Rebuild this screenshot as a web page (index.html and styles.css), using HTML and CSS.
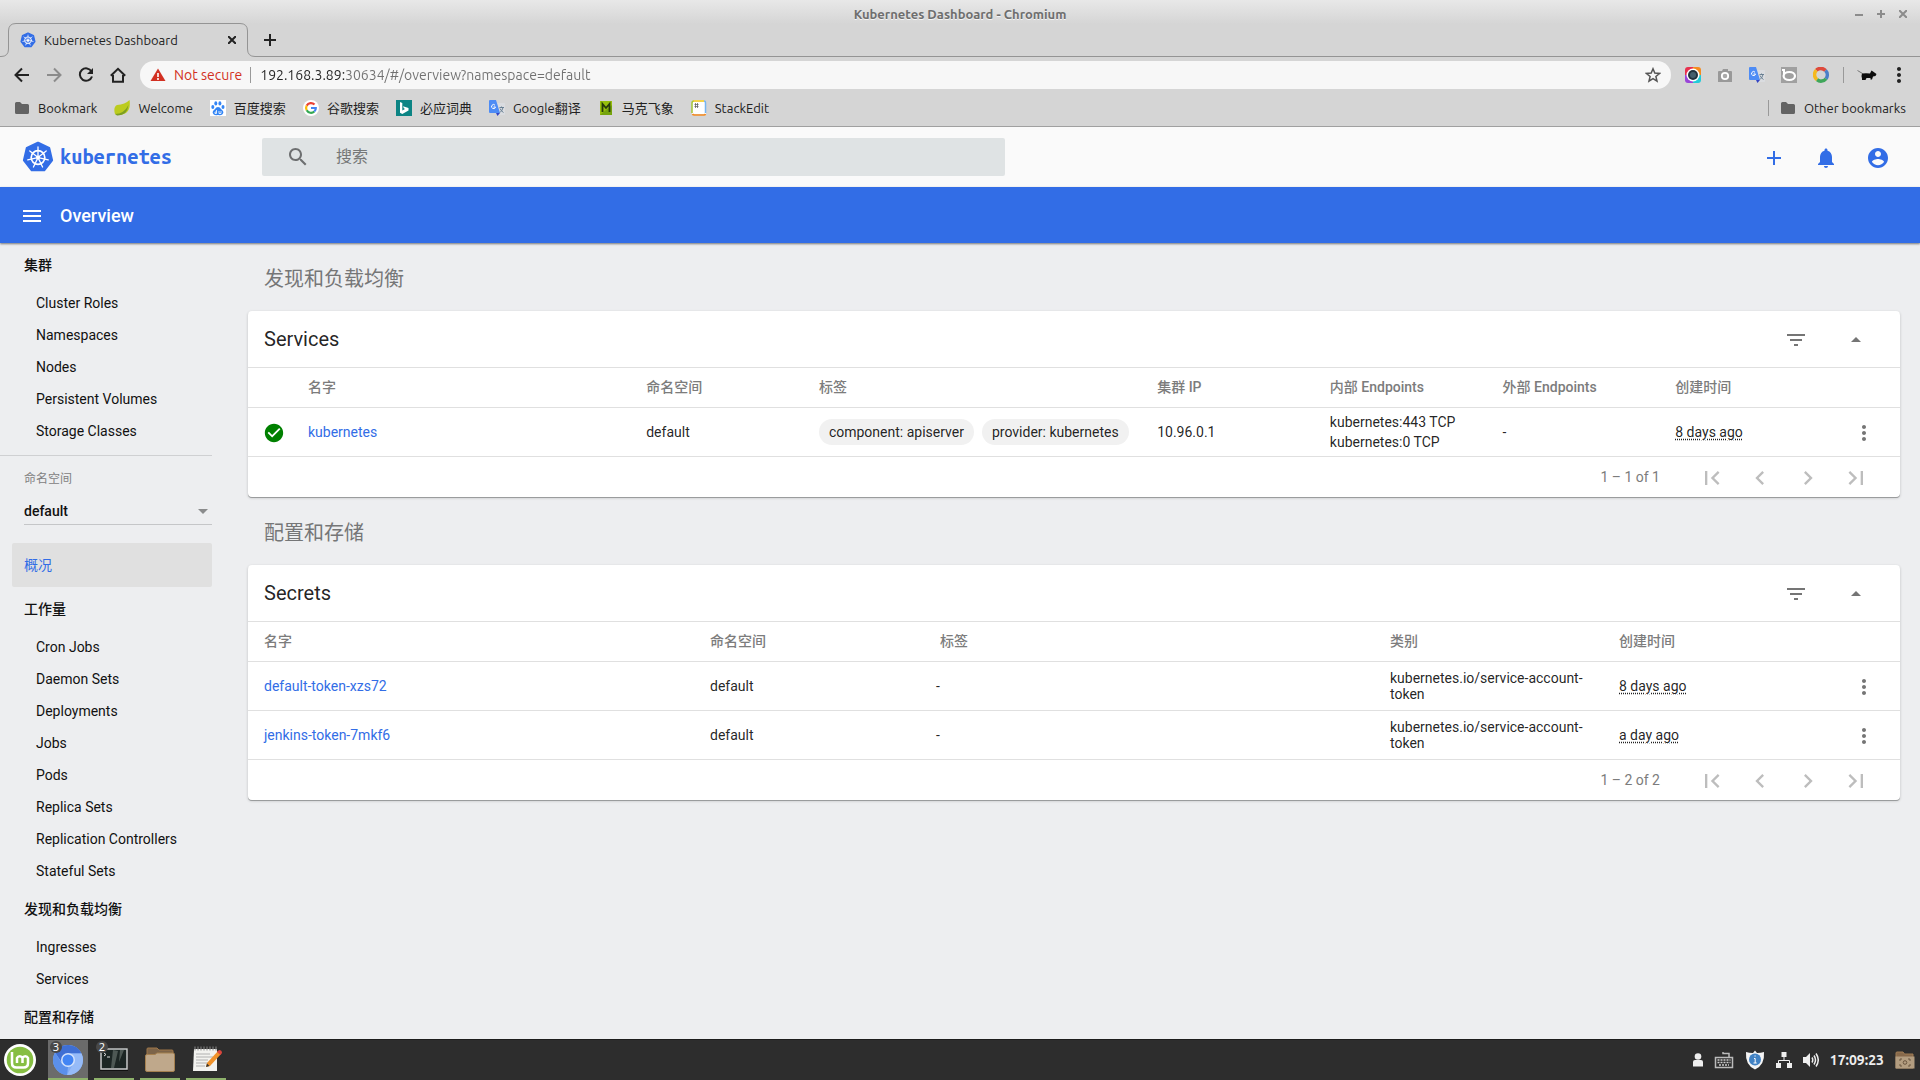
FILE: index.html
```html
<!DOCTYPE html>
<html lang="zh-CN">
<head>
<meta charset="utf-8">
<title>Kubernetes Dashboard</title>
<link rel="stylesheet" href="styles.css">
</head>
<body>
<svg class="sprite" aria-hidden="true">
  <symbol id="k8s" viewBox="0 0 32 32">
    <path d="M16 2 27 7.200 29.800 19.200 22.200 29H9.800L2.200 19.200 5 7.200Z" fill="#326de6" stroke="#326de6" stroke-width="2.600" stroke-linejoin="round"/>
    <g stroke="#fff" fill="none" stroke-linecap="round">
      <circle cx="16" cy="16.500" r="6.800" stroke-width="1.700"/>
      <g stroke-width="1.300">
        <path d="M16 15V6"/>
        <path d="M16 15V6" transform="rotate(51.430 16 16.500)"/>
        <path d="M16 15V6" transform="rotate(102.860 16 16.500)"/>
        <path d="M16 15V6" transform="rotate(154.290 16 16.500)"/>
        <path d="M16 15V6" transform="rotate(205.710 16 16.500)"/>
        <path d="M16 15V6" transform="rotate(257.140 16 16.500)"/>
        <path d="M16 15V6" transform="rotate(308.570 16 16.500)"/>
      </g>
    </g>
    <circle cx="16" cy="16.500" r="2" fill="#fff"/>
  </symbol>
  <symbol id="folder" viewBox="0 0 16 16"><path d="M1 3.500A1.500 1.500 0 0 1 2.500 2H6l2 2h5.500A1.500 1.500 0 0 1 15 5.500v7a1.500 1.500 0 0 1-1.500 1.500h-11A1.500 1.500 0 0 1 1 12.500Z" fill="#636363"/></symbol>
  <symbol id="translate" viewBox="0 0 16 16">
    <path d="M6 3h9a1 1 0 0 1 1 1v10a1 1 0 0 1-1 1H10Z" fill="#dadce0"/>
    <path d="M1 0h6l4 13H1a1 1 0 0 1-1-1V1a1 1 0 0 1 1-1Z" fill="#4e8cf5"/>
    <path d="M7 13h4l-2.500 3Z" fill="#3344c4"/>
    <path d="M6 5.200A2 2 0 1 0 6.500 7H4.500" fill="none" stroke="#fff" stroke-width="1"/>
    <path d="M10.500 7.500H15M12.500 6.500v1M14 7.500q-.5 3-3 5M11 8.500q1 2.500 3.500 4" fill="none" stroke="#60788c" stroke-width=".9"/>
  </symbol>
  <symbol id="more" viewBox="0 0 24 24"><path d="M12 8c1.100 0 2-.9 2-2s-.9-2-2-2-2 .9-2 2 .9 2 2 2zm0 2c-1.100 0-2 .9-2 2s.9 2 2 2 2-.9 2-2-.9-2-2-2zm0 6c-1.100 0-2 .9-2 2s.9 2 2 2 2-.9 2-2-.9-2-2-2z"/></symbol>
  <symbol id="filter" viewBox="0 0 24 24"><path d="M10 18h4v-2h-4v2zM3 6v2h18V6H3zm3 7h12v-2H6v2z"/></symbol>
  <symbol id="up" viewBox="0 0 24 24"><path d="m7 14 5-5 5 5z"/></symbol>
  <symbol id="first" viewBox="0 0 24 24"><path d="M18.410 16.590 13.820 12l4.590-4.590L17 6l-6 6 6 6zM6 6h2v12H6z"/></symbol>
  <symbol id="prev" viewBox="0 0 24 24"><path d="M15.410 7.410 14 6l-6 6 6 6 1.410-1.410L10.830 12z"/></symbol>
  <symbol id="next" viewBox="0 0 24 24"><path d="M10 6 8.590 7.410 13.170 12l-4.580 4.590L10 18l6-6z"/></symbol>
  <symbol id="last" viewBox="0 0 24 24"><path d="M5.590 7.410 10.180 12l-4.590 4.590L7 18l6-6-6-6zM16 6h2v12h-2z"/></symbol>
</svg>

<header class="browser">
  <div class="titlebar">
    <span class="window-title">Kubernetes Dashboard - Chromium</span>
    <div class="window-buttons">
      <button aria-label="Minimize"><svg width="8" height="8" viewBox="0 0 8 8"><path d="M0 5h8"/></svg></button>
      <button aria-label="Maximize"><svg width="8" height="8" viewBox="0 0 8 8"><path d="M0 4h8M4 0v8"/></svg></button>
      <button aria-label="Close"><svg width="8" height="8" viewBox="0 0 8 8"><path d="m0 0 8 8M8 0 0 8"/></svg></button>
    </div>
  </div>

  <div class="tabstrip">
    <svg class="tab-edge" width="16" height="34" viewBox="0 0 16 34"><path d="M0 33.500h1q7.500 0 7.500-7.500V8Q8.500.5 16 .5"/></svg>
    <div class="tab">
      <svg width="16" height="16"><use href="#k8s"/></svg>
      <span>Kubernetes Dashboard</span>
      <button aria-label="Close tab"><svg width="8" height="8" viewBox="0 0 8 8"><path d="m0 0 8 8M8 0 0 8"/></svg></button>
    </div>
    <svg class="tab-edge" width="16" height="34" viewBox="0 0 16 34"><path d="M16 33.500h-1q-7.500 0-7.500-7.500V8Q7.500.5 0 .5"/></svg>
    <div class="strip-rest">
      <button aria-label="New tab"><svg width="12" height="12" viewBox="0 0 12 12"><path d="M0 6h12M6 0v12"/></svg></button>
    </div>
  </div>

  <div class="toolbar">
    <button aria-label="Back"><svg width="16" height="16" viewBox="0 0 16 16"><path d="M15 8H2M8 1.500 1.500 8 8 14.500"/></svg></button>
    <button class="dim" aria-label="Forward"><svg width="16" height="16" viewBox="0 0 16 16"><path d="M1 8h13M8 1.500 14.500 8 8 14.500"/></svg></button>
    <button aria-label="Reload"><svg width="16" height="16" viewBox="0 0 16 16"><path d="M13.500 4.500A6.200 6.200 0 1 0 14 9.500"/><path class="solid" d="M15 1v6H9Z"/></svg></button>
    <button aria-label="Home"><svg width="16" height="16" viewBox="0 0 16 16"><path d="M.8 8.800 8 1.800l7.200 7M3 8v6.700h10V8"/></svg></button>
    <div class="omnibox">
      <svg width="16" height="16" viewBox="0 0 16 16"><path d="M8 1.500 15.500 14H.5Z" fill="#d23022"/><path d="M8 6v4M8 11v2" stroke="#fff" stroke-width="1.600"/></svg>
      <span class="not-secure">Not secure</span>
      <input class="url" type="text" aria-label="Address" value="192.168.3.89:30634/#/overview?namespace=default">
      <button aria-label="Bookmark this page"><svg width="16" height="16" viewBox="0 0 16 16"><path class="star" d="m8 1.800 1.800 4.300 4.700.4-3.600 3 1.100 4.600L8 11.700l-4 2.400 1.100-4.600-3.600-3 4.700-.4Z"/></svg></button>
    </div>
    <button aria-label="Color camera"><svg width="16" height="16" viewBox="0 0 16 16"><path d="M3 0h5v8H0V3a3 3 0 0 1 3-3Z" fill="#e8314f"/><path d="M8 0h5a3 3 0 0 1 3 3v5H8Z" fill="#f58b1e"/><path d="M8 8h8v5a3 3 0 0 1-3 3H8Z" fill="#22cbd8"/><path d="M0 8h8v8H3a3 3 0 0 1-3-3Z" fill="#9a45d8"/><circle cx="8" cy="8" r="6.500" fill="#fff"/><circle cx="8" cy="8" r="5" fill="#22333f"/><circle cx="8" cy="8" r="3" fill="#455f6d"/></svg></button>
    <button aria-label="Capture"><svg width="16" height="16" viewBox="0 0 16 16"><path d="M2 4h3l1-2h5v2h3a1 1 0 0 1 1 1v10H1V5a1 1 0 0 1 1-1Z" fill="#999"/><circle cx="8" cy="9" r="3.200" fill="#aaa" stroke="#fff" stroke-width="1.800"/></svg></button>
    <button aria-label="Translate"><svg width="16" height="16"><use href="#translate"/></svg></button>
    <button aria-label="Bing dictionary"><svg width="16" height="16" viewBox="0 0 16 16"><path d="M0 0h16v16H0Z" fill="#a0a0a0"/><path d="M1 3h2v6" fill="none" stroke="#fff" stroke-width="2"/><ellipse cx="8.300" cy="9" rx="5.700" ry="4" fill="#a0a0a0" stroke="#fff" stroke-width="2.200"/></svg></button>
    <button aria-label="Color ring"><svg width="16" height="16" viewBox="0 0 16 16" class="ring"><path d="M3.300 3.300A6.300 6.300 0 0 1 12.500 3.500" stroke="#de4a3c"/><path d="M12.500 3.500a6.300 6.300 0 0 1 .5 8.200" stroke="#4c7fc8"/><path d="M13 11.700a6.300 6.300 0 0 1-9 1" stroke="#3fa65a"/><path d="M4 12.700a6.300 6.300 0 0 1-.7-9.400" stroke="#f5b91d"/></svg></button>
    <i class="bar-sep"></i>
    <button aria-label="Profile"><svg width="20" height="16" viewBox="0 0 20 16"><path d="m.5 3.500 5 3" stroke="#777"/><path d="M5 6.500q4-.5 8 0l1.500-3 1.500 1 3.500 2.500-1 2-2.500.5-1 3h-1.500v-1.500h-4L8.500 13H5v-1.500Q4 9 5 6.500Z" fill="#0c0c0c"/></svg></button>
    <button aria-label="Menu"><svg width="16" height="20" viewBox="4 2 16 20" fill="#222"><use href="#more" x="0" y="0" width="24" height="24"/></svg></button>
  </div>

  <nav class="bookmarks" aria-label="Bookmarks">
    <a href="#"><svg width="16" height="16"><use href="#folder"/></svg>Bookmark</a>
    <a href="#"><svg width="16" height="16" viewBox="0 0 16 16"><path d="M15.500 0Q17 9 12 13 7 16 1 14-1 7 3 5q8-.5 12.500-5Z" fill="#bccc1e"/><path d="M1 14q9 0 13.500-9Q13 16 3 15.500Z" fill="#7d9f22"/></svg>Welcome</a>
    <a href="#"><svg width="16" height="16" viewBox="0 0 16 16"><path d="M0 0h16v16H0Z" fill="#fff"/><g fill="#3385f5"><ellipse cx="2.800" cy="7" rx="1.500" ry="2"/><ellipse cx="5.800" cy="3.400" rx="1.500" ry="2.100"/><ellipse cx="9.900" cy="3.400" rx="1.500" ry="2.100"/><ellipse cx="13" cy="7" rx="1.500" ry="2"/><path d="M8 7q2 0 3 2l2 2q1 2-.5 3.300Q11 15.500 8 15q-3 .5-4.500-.7Q2 13 3 11l2-2q1-2 3-2Z"/></g><path d="M6.500 10v3.500H5V12h1.500M9 11v2.500h2V11" fill="none" stroke="#fff" stroke-width=".8"/></svg>百度搜索</a>
    <a href="#"><svg width="16" height="16" viewBox="0 0 16 16"><circle cx="8" cy="8" r="8" fill="#fff"/><g fill="none" stroke-width="2.200"><path d="M11.500 4.600A4.900 4.900 0 0 0 3.700 5.600" stroke="#ea4335"/><path d="M3.700 5.600a4.900 4.900 0 0 0 0 4.700" stroke="#fbbc05"/><path d="M3.700 10.300a4.900 4.900 0 0 0 7.600 1.200" stroke="#34a853"/><path d="M11.300 11.500Q12.900 10 12.800 8H8" stroke="#4285f4"/></g></svg>谷歌搜索</a>
    <a href="#"><svg width="16" height="16" viewBox="0 0 16 16"><path d="M0 0h16v16H0Z" fill="#0c8484"/><path d="m4 2 2.300 1v7.500L9 9 7.800 8.300 7 6.200 12.500 8v2.500L6.300 14 4 12.700Z" fill="#fff"/></svg>必应词典</a>
    <a href="#"><svg width="16" height="16"><use href="#translate"/></svg>Google翻译</a>
    <a href="#"><svg width="16" height="16" viewBox="0 0 16 16"><path d="M2 1h12v14H2Z" fill="#96bf0d"/><path d="M2 15 14 5v10Z" fill="#75a30d"/><path d="M4.500 12V4L8 8l3.500-4v8" fill="none" stroke="#263a0b" stroke-width="1.800"/></svg>马克飞象</a>
    <a href="#"><svg width="16" height="16" viewBox="0 0 16 16"><path d="M1 2h14v12H1Z" fill="#fff"/><path d="M1 13V3q0-2 2-2" fill="none" stroke="#a4c639" stroke-width="1.500"/><path d="M2.500 1H13" stroke="#ffd21c" stroke-width="1.500"/><path d="M13 1q1.500 0 1.500 2v10" fill="none" stroke="#75b5f2" stroke-width="1.500"/><path d="M1.500 14q.5 1 2 1H13q1 0 1.500-1" fill="none" stroke="#f58a20" stroke-width="1.700"/><path d="M4.500 3v5M6.500 3v5M3.500 4.500h4M3.500 6.500h4" stroke="#666" stroke-width=".8"/></svg>StackEdit</a>
    <i class="bar-sep push"></i>
    <a class="other" href="#"><svg width="16" height="16"><use href="#folder"/></svg>Other bookmarks</a>
  </nav>
</header>

<div class="app">
  <header class="app-header">
    <a class="brand" href="#"><svg width="32" height="32"><use href="#k8s"/></svg><span>kubernetes</span></a>
    <label class="search">
      <svg width="24" height="24" viewBox="0 0 24 24"><path d="M15.500 14h-.79l-.28-.27C15.410 12.590 16 11.110 16 9.500 16 5.910 13.090 3 9.500 3S3 5.910 3 9.500 5.910 16 9.500 16c1.610 0 3.090-.59 4.230-1.570l.27.28v.79l5 4.990L20.490 19l-4.990-5zm-6 0C7.010 14 5 11.990 5 9.500S7.010 5 9.500 5 14 7.010 14 9.500 11.990 14 9.500 14z"/></svg>
      <input type="text" placeholder="搜索" aria-label="搜索">
    </label>
    <div class="app-actions">
      <button aria-label="Create"><svg width="24" height="24" viewBox="0 0 24 24"><path d="M19 13h-6v6h-2v-6H5v-2h6V5h2v6h6v2z"/></svg></button>
      <button aria-label="Notifications"><svg width="24" height="24" viewBox="0 0 24 24"><path d="M12 22c1.100 0 2-.9 2-2h-4c0 1.100.89 2 2 2zm6-6v-5c0-3.070-1.640-5.640-4.500-6.320V4c0-.83-.67-1.500-1.500-1.500s-1.500.67-1.500 1.500v.68C7.630 5.360 6 7.920 6 11v5l-2 2v1h16v-1l-2-2z"/></svg></button>
      <button aria-label="Account"><svg width="24" height="24" viewBox="0 0 24 24"><path d="M12 2C6.480 2 2 6.480 2 12s4.480 10 10 10 10-4.480 10-10S17.520 2 12 2zm0 3c1.660 0 3 1.340 3 3s-1.340 3-3 3-3-1.340-3-3 1.340-3 3-3zm0 14.200c-2.500 0-4.710-1.280-6-3.220.03-1.990 4-3.080 6-3.080 1.990 0 5.970 1.090 6 3.080-1.290 1.940-3.500 3.220-6 3.220z"/></svg></button>
    </div>
  </header>

  <div class="action-bar">
    <button aria-label="Toggle navigation"><svg width="24" height="24" viewBox="0 0 24 24"><path d="M3 18h18v-2H3v2zm0-5h18v-2H3v2zm0-7v2h18V6H3z"/></svg></button>
    <h1>Overview</h1>
  </div>

  <div class="app-body">
    <nav class="sidebar" aria-label="Main">
      <a class="group" href="#">集群</a>
      <a class="item" href="#">Cluster Roles</a>
      <a class="item" href="#">Namespaces</a>
      <a class="item" href="#">Nodes</a>
      <a class="item" href="#">Persistent Volumes</a>
      <a class="item" href="#">Storage Classes</a>
      <div class="namespace">
        <label for="ns">命名空间</label>
        <div class="select-box">
          <select id="ns"><option>default</option></select>
          <svg width="10" height="5" viewBox="0 0 10 5"><path d="M0 0h10L5 5z"/></svg>
        </div>
      </div>
      <a class="group active" href="#">概况</a>
      <a class="group" href="#">工作量</a>
      <a class="item" href="#">Cron Jobs</a>
      <a class="item" href="#">Daemon Sets</a>
      <a class="item" href="#">Deployments</a>
      <a class="item" href="#">Jobs</a>
      <a class="item" href="#">Pods</a>
      <a class="item" href="#">Replica Sets</a>
      <a class="item" href="#">Replication Controllers</a>
      <a class="item" href="#">Stateful Sets</a>
      <a class="group" href="#">发现和负载均衡</a>
      <a class="item" href="#">Ingresses</a>
      <a class="item" href="#">Services</a>
      <a class="group" href="#">配置和存储</a>
    </nav>

    <main class="content">
      <h2 class="section-title">发现和负载均衡</h2>
      <section class="card">
        <div class="card-head">
          <h3>Services</h3>
          <button aria-label="Filter"><svg width="24" height="24"><use href="#filter"/></svg></button>
          <button aria-label="Collapse"><svg width="24" height="24"><use href="#up"/></svg></button>
        </div>
        <table class="services">
          <thead>
            <tr><th></th><th>名字</th><th>命名空间</th><th>标签</th><th>集群 IP</th><th>内部 Endpoints</th><th>外部 Endpoints</th><th>创建时间</th><th></th></tr>
          </thead>
          <tbody>
            <tr>
              <td class="status"><svg width="22" height="22" viewBox="0 0 24 24"><path d="M12 2C6.480 2 2 6.480 2 12s4.480 10 10 10 10-4.480 10-10S17.520 2 12 2zm-2 15-5-5 1.410-1.410L10 14.170l7.590-7.590L19 8l-9 9z"/></svg></td>
              <td><a href="#">kubernetes</a></td>
              <td>default</td>
              <td class="chips"><span>component: apiserver</span><span>provider: kubernetes</span></td>
              <td>10.96.0.1</td>
              <td class="endpoints">kubernetes:443 TCP<br>kubernetes:0 TCP</td>
              <td>-</td>
              <td><span class="age">8 days ago</span></td>
              <td class="menu"><button aria-label="Actions"><svg width="24" height="24"><use href="#more"/></svg></button></td>
            </tr>
          </tbody>
        </table>
        <div class="pager">
          <span>1 – 1 of 1</span>
          <button aria-label="First page" disabled><svg width="28" height="28"><use href="#first"/></svg></button>
          <button aria-label="Previous page" disabled><svg width="28" height="28"><use href="#prev"/></svg></button>
          <button aria-label="Next page" disabled><svg width="28" height="28"><use href="#next"/></svg></button>
          <button aria-label="Last page" disabled><svg width="28" height="28"><use href="#last"/></svg></button>
        </div>
      </section>

      <h2 class="section-title">配置和存储</h2>
      <section class="card">
        <div class="card-head">
          <h3>Secrets</h3>
          <button aria-label="Filter"><svg width="24" height="24"><use href="#filter"/></svg></button>
          <button aria-label="Collapse"><svg width="24" height="24"><use href="#up"/></svg></button>
        </div>
        <table class="secrets">
          <thead>
            <tr><th>名字</th><th>命名空间</th><th class="label-head">标签</th><th>类别</th><th>创建时间</th><th></th></tr>
          </thead>
          <tbody>
            <tr>
              <td><a href="#">default-token-xzs72</a></td>
              <td>default</td>
              <td>-</td>
              <td class="type">kubernetes.io/service-account-token</td>
              <td><span class="age">8 days ago</span></td>
              <td class="menu"><button aria-label="Actions"><svg width="24" height="24"><use href="#more"/></svg></button></td>
            </tr>
            <tr>
              <td><a href="#">jenkins-token-7mkf6</a></td>
              <td>default</td>
              <td>-</td>
              <td class="type">kubernetes.io/service-account-token</td>
              <td><span class="age">a day ago</span></td>
              <td class="menu"><button aria-label="Actions"><svg width="24" height="24"><use href="#more"/></svg></button></td>
            </tr>
          </tbody>
        </table>
        <div class="pager">
          <span>1 – 2 of 2</span>
          <button aria-label="First page" disabled><svg width="28" height="28"><use href="#first"/></svg></button>
          <button aria-label="Previous page" disabled><svg width="28" height="28"><use href="#prev"/></svg></button>
          <button aria-label="Next page" disabled><svg width="28" height="28"><use href="#next"/></svg></button>
          <button aria-label="Last page" disabled><svg width="28" height="28"><use href="#last"/></svg></button>
        </div>
      </section>
    </main>
  </div>
</div>

<footer class="taskbar">
  <button class="mint" aria-label="Menu"><svg width="32" height="32" viewBox="0 0 32 32"><circle cx="16" cy="16" r="16" fill="#fff"/><circle cx="16" cy="16" r="13.300" fill="#86be43"/><path d="M8 8v11q0 4.500 4.500 4.500h7q4.500 0 4.500-4.500v-5a3 3 0 0 0-5.500 0v5m0-5a3 3 0 0 0-5.500 0v5" fill="none" stroke="#fff" stroke-width="2.500"/></svg></button>
  <button class="task current" aria-label="Chromium"><svg width="32" height="32" viewBox="0 0 32 32"><circle cx="16" cy="16" r="15" fill="#80acf4"/><path d="M3 8.500A15 15 0 0 1 29.500 9.500H16L9.500 18Z" fill="#3f6fd3"/><path d="M3 8.500 9.800 19.500 16 23l-1 8A15 15 0 0 1 3 8.500Z" fill="#5b90ea"/><path d="M22 18.500 15 31A15 15 0 0 0 29.500 9.500H19Z" fill="#96bbf8"/><circle cx="16" cy="16" r="7" fill="#d5e3fb"/><circle cx="16" cy="16" r="5.500" fill="#4285f4"/></svg><span class="badge">3</span></button>
  <button class="task" aria-label="Terminal"><svg width="32" height="32" viewBox="0 0 32 32"><path d="M2 4h28v23H2Z" fill="#111" /><path d="M3 5h26v20H3Z" fill="#1c2624" stroke="#c9cccb" stroke-width="1.500"/><path d="m15 6 5 1-4 17h-3ZM22 6h4l-5 12Z" fill="#4d5854"/><path d="m6 9 2 1.500L6 12M9 13h3" fill="none" stroke="#ddd"/></svg><span class="badge">2</span></button>
  <button class="task" aria-label="Files"><svg width="32" height="32" viewBox="0 0 32 32"><path d="M3 12V5q0-1 1-1h9l2 2h13q1 0 1 1v6" fill="#7d6449" stroke="#a07748"/><path d="M1.500 12q0-1.500 1.500-1.500h8L13 9h16q1.500 0 1.500 1.500V26q0 1.500-1.500 1.500H3Q1.500 27.500 1.500 26Z" fill="#bfa88b" stroke="#a5804f"/></svg></button>
  <button class="task" aria-label="Text editor"><svg width="32" height="32" viewBox="0 0 32 32"><path d="M4 5h23v22H3Z" fill="#f2f2ef"/><path d="M5 2.500v4M8 2.500v4M11 2.500v4M14 2.500v4M17 2.500v4M20 2.500v4M23 2.500v4M26 2.500v4" stroke="#888"/><path d="M6 10h14M6 13h17M6 16h12M6 19h14M6 22h9" stroke="#b0b0b0"/><path d="m16 23 1-4L28 7l3 3-11 12Z" fill="#f0922b"/><path d="m27 8 2-2q3 0 3 3l-1.500 2Z" fill="#d9453d"/><path d="m16 23 1-3.500 2.500 2.500Z" fill="#333"/></svg></button>
  <div class="tray">
    <svg width="10" height="20" viewBox="5 0 10 20"><circle cx="10" cy="6.500" r="3.300" fill="#eee"/><path d="M5 16.500V12q0-2 2-2h6q2 0 2 2v4.500Z" fill="#eee"/></svg>
    <svg width="20" height="20" viewBox="0 0 20 20"><path d="M9 2v1.500h6V7" fill="none" stroke="#bbb" stroke-width="1.500"/><path d="M1.500 7.500h17v10h-17Z" fill="#2d2d2d" stroke="#bbb" stroke-width="1.500"/><path d="M3.500 10h13M3.500 12.500h13M5 15h10" stroke="#ccc" stroke-width="1.500" stroke-dasharray="2 1"/></svg>
    <svg width="20" height="20" viewBox="0 0 20 20"><path d="M10 .5 12 3q4 0 7-1 1 13-9 17.500Q0 15 1 2q3 1 7 1Z" fill="#f4f4f4"/><circle cx="10" cy="9.500" r="6" fill="#4182c4"/><path d="M9 8.500h1.200V13M8.500 13h3.200M9.500 6h1.200" stroke="#fff" fill="none"/></svg>
    <svg width="16" height="16" viewBox="0 0 16 16"><path d="M5.500 0h5v5h-5ZM0 11h5v5H0ZM11 11h5v5h-5Z" fill="#eee"/><path d="M8 5v3.500M2.500 11V8.500h11V11" fill="none" stroke="#eee"/></svg>
    <svg width="16" height="16" viewBox="0 0 16 16"><path d="M0 5h3l4-4v14l-4-4H0Z" fill="#eee"/><path d="M9 5.500q1.500 2.500 0 5M11 3.500q3 4.500 0 9M13 1.500q4.500 6.500 0 13" fill="none" stroke="#eee" stroke-width="1.500"/></svg>
    <time>17:09:23</time>
    <svg width="20" height="20" viewBox="0 0 20 20"><path d="M1 18V3q0-1 1-1h6l1.500 2H18v14Z" fill="#87694b" stroke="#a07d54"/><path d="M.5 6.500h19v12H.5Z" fill="#b39d80"/><path d="M5 11V9h2M13 9h2v2M15 14v2h-2M7 16H5v-2" fill="none" stroke="#6b5640" /><circle cx="10" cy="12.500" r="1.800" fill="none" stroke="#6b5640"/></svg>
  </div>
</footer>
</body>
</html>
```
FILE: styles.css
```css
* { box-sizing: border-box; }

body {
  margin: 0;
  height: 100vh;
  display: flex;
  flex-direction: column;
  overflow: hidden;
  font: 14px/20px Roboto, "Noto Sans CJK SC", sans-serif;
  color: rgba(0, 0, 0, .87);
  background: #edeef0;
}

.sprite { display: none; }
svg { display: block; flex: none; }
a { color: inherit; text-decoration: none; }
h1, h2, h3 { margin: 0; font-weight: 400; }

button {
  display: flex;
  align-items: center;
  justify-content: center;
  padding: 0;
  border: 0;
  background: none;
  font: inherit;
  color: inherit;
}

input, select { border: 0; outline: 0; padding: 0; background: none; font: inherit; color: inherit; }

/* Browser window */
.browser {
  flex: none;
  background: linear-gradient(#e8e8e8, #d5d5d5 24px);
  border-bottom: 1px solid #a0a0a0;
  font: 13px/20px Ubuntu, "Noto Sans", "Noto Sans CJK SC", sans-serif;
  color: #222;
}

.titlebar {
  display: grid;
  grid-template-columns: 1fr auto 1fr;
  align-items: center;
  height: 23px;
  padding: 4px 13px 0;
}
.window-title { grid-column: 2; font-weight: 600; color: #6e6e6e; text-shadow: 0 1px #f4f4f4; }
.window-buttons { display: flex; justify-content: flex-end; gap: 14px; }
.window-buttons svg { fill: none; stroke: #8c8c8c; stroke-width: 2; }

.tabstrip { display: flex; height: 34px; }
.tab-edge { fill: none; stroke: #949494; }
.tab {
  width: 224px;
  display: flex;
  align-items: center;
  gap: 8px;
  padding: 0 0 2px 4px;
  border-top: 1px solid #949494;
}
.tab span { flex: 1; }
.tab button { width: 16px; height: 16px; }
.tab button svg, .strip-rest svg { fill: none; stroke: #222; stroke-width: 2; }
.strip-rest { flex: 1; display: flex; align-items: center; border-bottom: 1px solid #949494; }
.strip-rest button { width: 28px; height: 28px; }

.toolbar { display: flex; align-items: center; height: 36px; padding: 0 5px 0 6px; }
.toolbar > button { width: 32px; height: 28px; }
.toolbar > button:nth-child(-n+4) svg { fill: none; stroke: #222; stroke-width: 2; }
.toolbar .dim { opacity: .4; }
.toolbar .solid { fill: #222; stroke: none; }
.ring { fill: none; stroke-width: 3.500; }

.omnibox {
  flex: 1;
  display: flex;
  align-items: center;
  height: 28px;
  margin: 0 6px;
  padding: 0 10px;
  border-radius: 14px;
  background: #f7f7f7;
  font-size: 14px;
}
.not-secure { margin-left: 8px; padding-right: 8px; border-right: 1px solid #999; line-height: 16px; color: #d23022; }
.url {
  flex: 1;
  height: 20px;
  margin-left: 9px;
  background: linear-gradient(90deg, #222 85px, #707070 85px);
  background-clip: text;
  color: transparent;
}
.star { fill: none; stroke: #555; stroke-width: 1.500; }

.bar-sep { width: 1px; height: 16px; margin: 0 7px 0 6px; background: #999; }
.bookmarks { display: flex; align-items: center; gap: 17px; height: 33px; padding: 0 14px 3px; }
.bookmarks a { display: flex; align-items: center; gap: 8px; }
.bookmarks .push { margin: 0 -6px 0 auto; }

/* Dashboard */
.app { flex: 1; min-height: 0; display: flex; flex-direction: column; }

.app-header {
  flex: none;
  display: grid;
  grid-template-columns: 262px 13fr 16fr;
  align-items: center;
  height: 60px;
  background: #fafafa;
}
.brand {
  display: flex;
  align-items: center;
  gap: 6px;
  padding-left: 22px;
  font: bold 19px/24px "Ubuntu Mono", "DejaVu Sans Mono", monospace;
  font-size: 20px;
  color: #326de6;
}
.search {
  display: flex;
  align-items: center;
  gap: 26px;
  height: 38px;
  padding: 0 24px;
  border-radius: 2px;
  background: #dfe3e4;
  font-size: 16px;
  fill: #6d6f70;
}
.search input { flex: 1; height: 24px; padding-bottom: 2px; }
.search input::placeholder { color: #757777; }
.app-actions { display: flex; justify-content: flex-end; gap: 28px; padding: 2px 30px 0 0; fill: #326de6; }

.action-bar {
  flex: none;
  display: flex;
  align-items: center;
  gap: 16px;
  height: 56px;
  padding: 2px 20px 0;
  background: #326de6;
  color: #fff;
  fill: #fff;
  box-shadow: 0 1px 2px rgba(0, 0, 0, .5);
}
.action-bar h1 { font-size: 18px; font-weight: 500; }

.app-body { flex: 1; min-height: 0; display: flex; }

.sidebar { width: 212px; flex: none; overflow: hidden; color: #111; }
.group { display: block; padding: 12px 24px; font-weight: 500; }
.item { display: block; padding: 6px 36px; white-space: nowrap; }
.active { margin-left: 12px; padding-left: 12px; border-radius: 2px; background: #e0e0e0; color: #326de6; font-weight: 400; }

.namespace {
  margin-top: 8px;
  padding: 15px 0 18px 24px;
  border-top: 1px solid #cfd0d2;
}
.namespace label { display: block; margin-bottom: 11px; font-size: 12px; line-height: 16px; color: #7f8081; }
.select-box { display: grid; align-items: center; border-bottom: 1px solid #c5c6c8; }
.select-box > * { grid-area: 1 / 1; }
.select-box select { height: 26px; appearance: none; font-weight: 500; }
.select-box svg { justify-self: end; margin-right: 4px; fill: #8a8b8c; pointer-events: none; }

.content { flex: 1; min-width: 0; padding: 0 20px 0 36px; }
.section-title { padding: 22px 16px 18px; font-size: 20px; line-height: 28px; color: #757677; }

.card {
  border-radius: 4px;
  background: #fff;
  box-shadow: 0 1px 0 #9a9c9d, 0 1px 3px rgba(0, 0, 0, .2);
  fill: #757575;
}
.card button { padding-top: 2px; }
.card-head { display: flex; align-items: center; gap: 36px; height: 56px; padding: 0 32px 0 16px; }
.card-head h3 { flex: 1; font-size: 20px; }

table, thead, tbody { display: block; }
tr { display: grid; align-items: center; border-top: 1px solid #e0e0e0; }
.services tr { grid-template-columns: 60px 47fr 24fr 47fr 24fr 24fr 24fr 24fr 52px; }
.secrets tr { grid-template-columns: 446fr 226fr 454fr 229fr 229fr 52px; padding-left: 16px; }
thead tr { height: 40px; }
tbody tr { height: 49px; }
th, td { min-width: 0; padding: 0; text-align: left; }
th { padding-bottom: 2px; font-weight: 500; color: #7c7c7c; }
td a { color: #326de6; }
.label-head { padding-left: 4px; }
.status { padding: 2px 0 0 15px; fill: #008000; }
.chips { display: flex; gap: 8px; white-space: nowrap; }
.chips span { padding: 3px 10px; border-radius: 13px; background: #f1f1f1; }
.type { padding-right: 24px; line-height: 16px; }
.age { text-decoration: underline dotted; text-underline-offset: 2px; }
.menu { padding-left: 4px; }

.pager {
  display: flex;
  align-items: center;
  justify-content: flex-end;
  height: 41px;
  padding-right: 20px;
  border-top: 1px solid #e0e0e0;
  color: #7c7c7c;
  fill: #bdbdbd;
}
.pager span { margin-right: 28px; }
.pager button { width: 48px; }

/* Desktop panel */
.taskbar {
  flex: none;
  display: flex;
  gap: 6px;
  height: 41px;
  padding: 0 5px 0 4px;
  border-top: 1px solid #1c1c1c;
  background: #2d2d2d;
}
.mint { margin-right: 6px; }
.task { position: relative; width: 40px; padding-top: 1px; border-bottom: 2px solid #8eb26b; }
.current { background: #6b6b6b; }
.badge {
  position: absolute;
  left: 2px;
  top: 1px;
  width: 12px;
  height: 12px;
  border-radius: 6px;
  background: #484848;
  font: 11px/12px "Noto Sans", sans-serif;
  color: #fff;
}
.tray { flex: 1; display: flex; align-items: center; justify-content: flex-end; gap: 11px; color: #eee; }
.tray time { font: bold 14px/20px Ubuntu, "Noto Sans", sans-serif; }
```
